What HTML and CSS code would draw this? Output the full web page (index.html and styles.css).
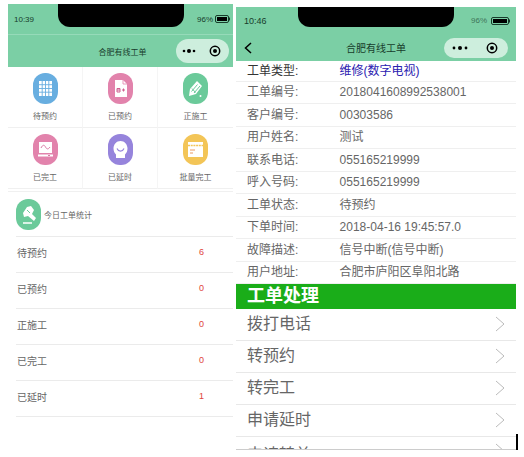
FILE: index.html
```
<!doctype html>
<html lang="zh-CN">
  <head>
    <meta charset="utf-8">
    <meta name="viewport" content="width=device-width, initial-scale=1">
    <title>合肥有线工单</title>
    <link rel="stylesheet" href="styles.css">
  </head>
  <body>
    <div id="main">
      <!-- home -->
      <div class="phone home">
        <header class="top">
          <div class="status">
            <span>10:39</span>
            <div class="notch"></div>
            <span class="power">96%
              <svg class="battery" viewBox="0 0 16 8"><rect x=".5" y=".5" width="13" height="7" rx="1.5" fill="none" stroke="#173c2b"/><rect x="2" y="2" width="10" height="4" fill="#000"/><path d="M14.5 2.5v3" stroke="#173c2b"/></svg>
            </span>
          </div>
          <div class="bar">
            <h1>合肥有线工单</h1>
            <div class="capsule">
              <button type="button" aria-label="更多"><svg width="14" height="6" viewBox="0 0 14 6"><circle cx="2" cy="3" r="1.3"/><circle cx="7" cy="3" r="2"/><circle cx="12" cy="3" r="1.3"/></svg></button>
              <button type="button" aria-label="关闭"><svg width="12" height="12" viewBox="0 0 12 12"><circle cx="6" cy="6" r="4.7" fill="none" stroke="#000" stroke-width="1.5"/><circle cx="6" cy="6" r="2"/></svg></button>
            </div>
          </div>
        </header>
        <nav class="menu">
          <a href="#">
            <svg class="icon blue" viewBox="0 0 25 31"><path d="M6 8h13v15H6z" fill="#fff"/><path d="M9.2 8v15M12.5 8v15M15.8 8v15M6 11.7h13M6 15.5h13M6 19.2h13" stroke="#68aee0" stroke-width=".9"/></svg>
            待预约
          </a>
          <a href="#">
            <svg class="icon pink" viewBox="0 0 25 31"><path d="M7 7h8l4 4v13H7z" fill="#fff"/><path d="M15 7v4h4" fill="none" stroke="#e283ac" stroke-width=".8"/><path d="M9 19v-3.5h3V19zM9 17h3M14 17h3M15.5 15.5v3" fill="none" stroke="#cf5f90"/></svg>
            已预约
          </a>
          <a href="#">
            <svg class="icon green" viewBox="0 0 25 31"><path d="M6 23l1-7 7-8 5 5-6 8z" fill="#fff"/><path d="M8.500 18.500l6-7M11 20l6-7M9 15.500l3.500 4" fill="none" stroke="#6bca9a"/><circle cx="17.500" cy="23" r="1" fill="#fff"/></svg>
            正施工
          </a>
          <a href="#">
            <svg class="icon pink" viewBox="0 0 25 31"><path d="M6 8h13v11H6zM5 20.500h15v2H5z" fill="#fff"/><path d="M8 14c2-4 3.500-3 4.500-1s2.500 3 4.500 0" fill="none" stroke="#d97aa5"/><path d="M15 21.500h2" stroke="#d97aa5"/></svg>
            已完工
          </a>
          <a href="#">
            <svg class="icon purple" viewBox="0 0 25 31"><path d="M12.500 7c4 0 7 3.500 7 7.500 0 2.500-1 4.500-2.500 6V24H8v-3.500C6.500 19 5.500 17 5.500 14.500c0-4 3-7.500 7-7.500z" fill="#fff"/><path d="M9 14.500c1.500 3.500 5.500 3.500 7 0" fill="none" stroke="#9684dc" stroke-width="1.200"/></svg>
            已延时
          </a>
          <a href="#">
            <svg class="icon yellow" viewBox="0 0 25 31"><path d="M5 8h15v15H5z" fill="#fff"/><path d="M5 11.500h15" stroke="#f3c557" stroke-width="1.500" stroke-dasharray="2 .7"/><path d="M7 16h5M7 19h3" stroke="#eb9a62"/></svg>
            批量完工
          </a>
        </nav>
        <section class="stats">
          <h2>
            <svg class="icon green" viewBox="0 0 25 31"><path d="M7 14l4-6 4-1 3 4-2 4 4 4-2 3-6-5-4 1z" fill="#fff"/><path d="M11 11l3 3" stroke="#6bca9a"/><path d="M7 24h9" stroke="#fff" stroke-width="1.500"/></svg>
            今日工单统计
          </h2>
          <ul>
            <li><span>待预约</span><span class="count">6</span></li>
            <li><span>已预约</span><span class="count">0</span></li>
            <li><span>正施工</span><span class="count">0</span></li>
            <li><span>已完工</span><span class="count">0</span></li>
            <li><span>已延时</span><span class="count">1</span></li>
          </ul>
        </section>
      </div>

      <!-- order detail -->
      <div class="phone detail">
        <header class="top">
          <div class="status">
            <span>10:46</span>
            <div class="notch"></div>
            <span class="power">96%
              <svg class="battery" viewBox="0 0 20 8"><rect x=".5" y=".5" width="17" height="7" rx="1.5" fill="none" stroke="#173c2b"/><rect x="2" y="2" width="14" height="4" fill="#000"/><path d="M18.500 2.500v3" stroke="#173c2b"/></svg>
            </span>
          </div>
          <div class="bar">
            <button type="button" class="back" aria-label="返回"><svg width="8" height="12" viewBox="0 0 8 12"><path d="M7 1L1.500 6 7 11" fill="none" stroke="#000" stroke-width="1.500"/></svg></button>
            <h1>合肥有线工单</h1>
            <div class="capsule">
              <button type="button" aria-label="更多"><svg width="16" height="6" viewBox="0 0 16 6"><circle cx="2" cy="3" r="1.400"/><circle cx="8" cy="3" r="2"/><circle cx="14" cy="3" r="1.400"/></svg></button>
              <button type="button" aria-label="关闭"><svg width="12" height="12" viewBox="0 0 12 12"><circle cx="6" cy="6" r="4.700" fill="none" stroke="#000" stroke-width="1.500"/><circle cx="6" cy="6" r="2"/></svg></button>
            </div>
          </div>
        </header>
        <table class="info">
          <tr class="type"><th scope="row">工单类型:</th><td>维修(数字电视)</td></tr>
          <tr><th scope="row">工单编号:</th><td>2018041608992538001</td></tr>
          <tr><th scope="row">客户编号:</th><td>00303586</td></tr>
          <tr><th scope="row">用户姓名:</th><td>测试</td></tr>
          <tr><th scope="row">联系电话:</th><td>055165219999</td></tr>
          <tr><th scope="row">呼入号码:</th><td>055165219999</td></tr>
          <tr><th scope="row">工单状态:</th><td>待预约</td></tr>
          <tr><th scope="row">下单时间:</th><td>2018-04-16 19:45:57.0</td></tr>
          <tr><th scope="row">故障描述:</th><td>信号中断(信号中断)</td></tr>
          <tr><th scope="row">用户地址:</th><td>合肥市庐阳区阜阳北路</td></tr>
        </table>
        <h2>工单处理</h2>
        <nav class="actions">
          <a href="#">拨打电话 <svg viewBox="0 0 10 16"><path d="M1 1l8 7-8 7"/></svg></a>
          <a href="#">转预约 <svg viewBox="0 0 10 16"><path d="M1 1l8 7-8 7"/></svg></a>
          <a href="#">转完工 <svg viewBox="0 0 10 16"><path d="M1 1l8 7-8 7"/></svg></a>
          <a href="#">申请延时 <svg viewBox="0 0 10 16"><path d="M1 1l8 7-8 7"/></svg></a>
          <a href="#" class="more">申请转单 <svg viewBox="0 0 10 16"><path d="M1 1l8 7-8 7"/></svg></a>
        </nav>
      </div>
      <div class="cursor"></div>
    </div>
  </body>
</html>
```
FILE: styles.css
```
* {
  box-sizing: border-box;
}
body {
  margin: 0;
  background: #fff;
  color: #666;
  font-family: "Liberation Sans", "Noto Sans CJK SC", sans-serif;
}
h1, h2, ul {
  margin: 0;
  padding: 0;
  font-weight: normal;
}
a {
  color: inherit;
  text-decoration: none;
}
button {
  display: flex;
  padding: 0;
  border: 0;
  background: none;
  cursor: pointer;
}
#main {
  display: grid;
  grid-template-columns: 225fr 283fr 2px;
  padding: 4px 6px 0 8px;
}
.detail {
  margin: 3px 0 0 3px;
}

/* header */
.top {
  background: #7bcfa5;
  color: #173c2b;
}
.status {
  display: flex;
  position: relative;
  align-items: center;
  justify-content: space-between;
  height: 31px;
  padding: 0 2px 0 6px;
  border-bottom: 1px solid #96dab9;
  font-size: 8px;
}
.notch {
  position: absolute;
  top: 0;
  left: 22%;
  width: 56%;
  height: 23px;
  border-radius: 0 0 12px 12px;
  background: #000;
}
.power {
  display: flex;
  align-items: center;
  gap: 2px;
}
.battery {
  width: 16px;
  height: 8px;
}
.bar {
  display: grid;
  grid-template-columns: 1fr auto 1fr;
  align-items: center;
  height: 32px;
  padding: 0 4px 0 8px;
}
.bar h1 {
  grid-column: 2;
  color: #173c2b;
  font-size: 8px;
}
.capsule {
  display: flex;
  grid-column: 3;
  align-items: center;
  justify-content: space-between;
  justify-self: end;
  width: 53px;
  height: 24px;
  padding: 0 8px 0 6px;
  border-radius: 12px;
  background: #cdeedd;
}
.detail .status {
  height: 27px;
  padding: 0 5px 0 8px;
  border-bottom: 0;
}
.detail .status > span:first-child {
  font-size: 9px;
}
.detail .notch {
  height: 20px;
}
.detail .power {
  gap: 4px;
  color: #3f7559;
}
.detail .battery {
  width: 20px;
}
.detail .bar {
  height: 27px;
  padding: 0 8px;
}
.detail .bar h1 {
  font-size: 10px;
}
.detail .capsule {
  width: 64px;
  height: 20px;
  padding: 0 10px 0 8px;
}

/* home menu */
.menu {
  display: grid;
  grid-template-columns: repeat(3, 1fr);
}
.menu a {
  display: flex;
  flex-direction: column;
  align-items: center;
  gap: 7px;
  height: 61px;
  padding-top: 6px;
  border-right: 1px solid #f5f5f5;
  border-bottom: 1px solid #f0f0f0;
  font-size: 8px;
  line-height: 12px;
}
.menu a:nth-child(3n) {
  border-right: 0;
}
.icon {
  width: 25px;
  height: 31px;
  border-radius: 12px;
}
.blue {
  background: #68aee0;
}
.pink {
  background: #e283ac;
}
.green {
  background: #6bca9a;
}
.purple {
  background: #9684dc;
}
.yellow {
  background: #f3c557;
}

/* today */
.stats {
  margin-top: 2px;
  border-top: 1px solid #f0f0f0;
}
.stats h2 {
  display: flex;
  align-items: center;
  gap: 3px;
  height: 44px;
  padding-left: 8px;
  font-size: 8px;
}
.stats ul {
  margin-left: 8px;
  border-top: 1px solid #ebebeb;
  list-style: none;
}
.stats li {
  display: flex;
  align-items: center;
  justify-content: space-between;
  height: 36px;
  padding: 0 29px 5px 1px;
  border-bottom: 1px solid #ebebeb;
  font-size: 10px;
}
.stats .count {
  color: #e0443c;
  font-size: 9px;
}

/* order info */
.info {
  width: 100%;
  border-collapse: collapse;
  font-size: 12px;
  line-height: 16px;
}
.info th, .info td {
  height: 22px;
  padding: 0;
  border-bottom: 1px solid #efefef;
  font-weight: normal;
  text-align: left;
}
.info tr:nth-child(odd) > * {
  height: 23px;
}
.info th {
  width: 37%;
  padding-left: 11px;
}
.info .type:first-child > * {
  height: 20px;
}
.info .type th {
  color: #333;
}
.info .type td {
  color: #2a20b0;
}
.detail h2 {
  padding-left: 11px;
  background: #1aad19;
  color: #fff;
  font-size: 18px;
  font-weight: bold;
  line-height: 25px;
}
.actions {
  border-bottom: 1px solid #ccc;
}
.actions a {
  display: flex;
  align-items: center;
  justify-content: space-between;
  height: 32px;
  padding: 0 11px;
  border-bottom: 1px solid #e8e8e8;
  font-size: 16px;
  line-height: 24px;
}
.actions svg {
  width: 10px;
  height: 16px;
  fill: none;
  stroke: #bbb;
}
.actions .more {
  align-items: flex-start;
  height: 12px;
  padding-top: 6px;
  border-bottom: 0;
  overflow: hidden;
}
.cursor {
  align-self: end;
  height: 16px;
  background: #000;
}
```
